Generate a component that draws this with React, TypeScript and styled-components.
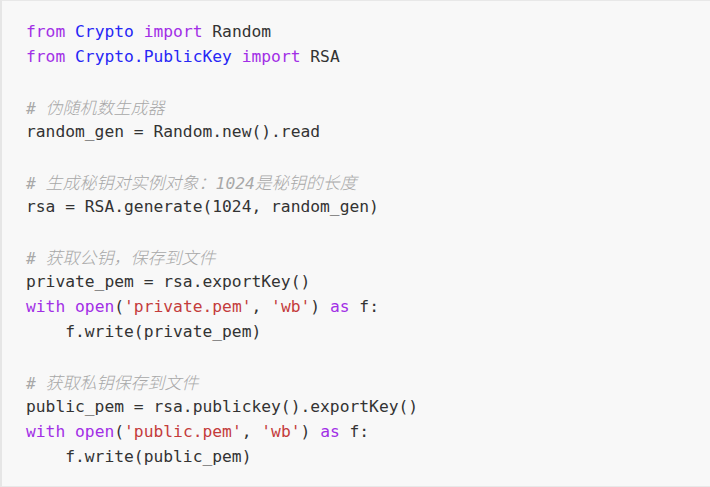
import React from "react";
import styled, { createGlobalStyle } from "styled-components";

const Global = createGlobalStyle`
  html, body { margin: 0; padding: 0; background: #ffffff; overflow: hidden; }
`;

const Block = styled.pre`
  margin: 0;
  width: 740px;
  box-sizing: border-box;
  background: #f8f8f8;
  border-top: 1px solid #e8e8e8;
  border-bottom: 1px solid #e8e8e8;
  border-left: 2px solid #e6e6e6;
  padding: 18px 0 17px 24px;
  font-family: "DejaVu Sans Mono", "Noto Sans CJK SC", monospace;
  font-size: 16.3px;
  line-height: 25px;
  color: #333333;
  white-space: pre;
`;

const Line = styled.div`
  height: 25px;
`;

type Kind = "kw" | "title" | "str" | "cmt" | "plain";

const Tok = styled.span<{ $k: Kind }>`
  color: ${(p) =>
    p.$k === "kw"
      ? "#a22fe6"
      : p.$k === "title"
      ? "#2727f5"
      : p.$k === "str"
      ? "#c43c3c"
      : p.$k === "cmt"
      ? "#a8a8a8"
      : "#333333"};
  font-style: ${(p) => (p.$k === "cmt" ? "italic" : "normal")};
`;

const Cjk = styled.span`
  font-family: "Noto Sans CJK SC", sans-serif;
  font-size: 17px;
  font-weight: 300;
`;

type Seg = [Kind, string];

const lines: Seg[][] = [
  [["kw", "from"], ["plain", " "], ["title", "Crypto"], ["plain", " "], ["kw", "import"], ["plain", " Random"]],
  [["kw", "from"], ["plain", " "], ["title", "Crypto.PublicKey"], ["plain", " "], ["kw", "import"], ["plain", " RSA"]],
  [],
  [["cmt", "# 伪随机数生成器"]],
  [["plain", "random_gen = Random.new().read"]],
  [],
  [["cmt", "# 生成秘钥对实例对象：1024是秘钥的长度"]],
  [["plain", "rsa = RSA.generate(1024, random_gen)"]],
  [],
  [["cmt", "# 获取公钥，保存到文件"]],
  [["plain", "private_pem = rsa.exportKey()"]],
  [["kw", "with"], ["plain", " "], ["kw", "open"], ["plain", "("], ["str", "'private.pem'"], ["plain", ", "], ["str", "'wb'"], ["plain", ") "], ["kw", "as"], ["plain", " f:"]],
  [["plain", "    f.write(private_pem)"]],
  [],
  [["cmt", "# 获取私钥保存到文件"]],
  [["plain", "public_pem = rsa.publickey().exportKey()"]],
  [["kw", "with"], ["plain", " "], ["kw", "open"], ["plain", "("], ["str", "'public.pem'"], ["plain", ", "], ["str", "'wb'"], ["plain", ") "], ["kw", "as"], ["plain", " f:"]],
  [["plain", "    f.write(public_pem)"]],
];

function renderText(text: string) {
  const parts = text.split(/([\u3000-\u9fff\uff00-\uffef]+)/);
  return parts.map((p, i) =>
    /[\u3000-\u9fff\uff00-\uffef]/.test(p) ? <Cjk key={i}>{p}</Cjk> : <React.Fragment key={i}>{p}</React.Fragment>
  );
}

export default function App() {
  return (
    <>
      <Global />
      <Block>
        {lines.map((segs, i) => (
          <Line key={i}>
            {segs.map(([k, t], j) => (
              <Tok key={j} $k={k}>
                {renderText(t)}
              </Tok>
            ))}
          </Line>
        ))}
      </Block>
    </>
  );
}
